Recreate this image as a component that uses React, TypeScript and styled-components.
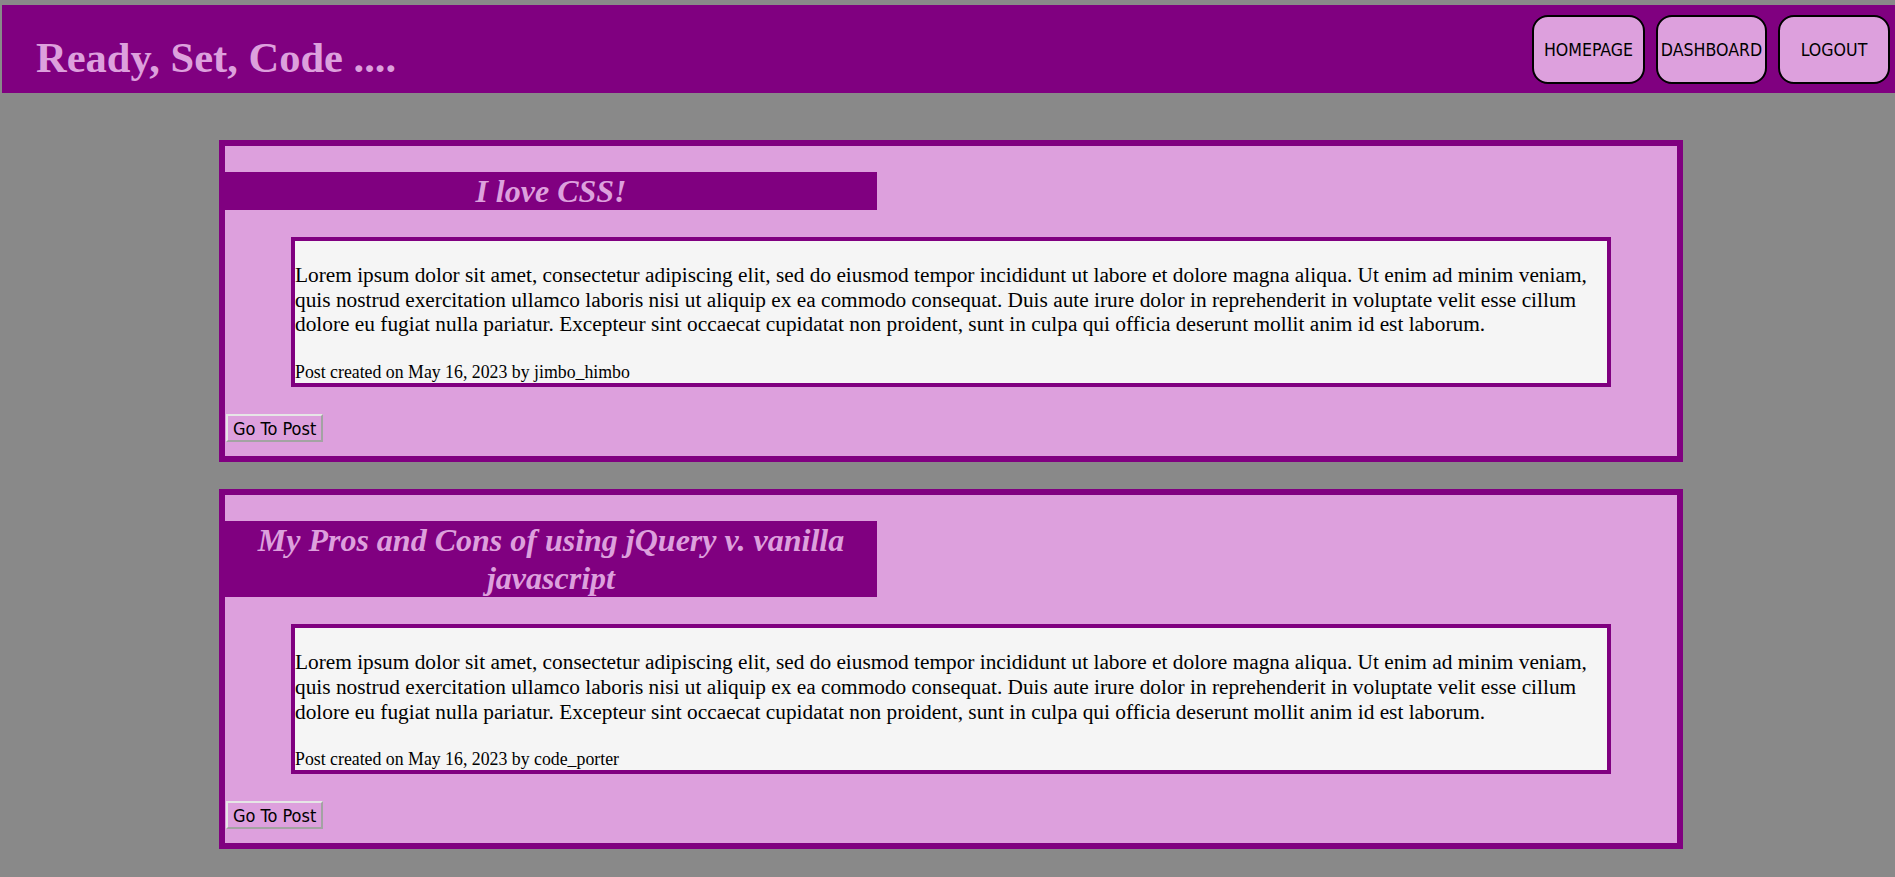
import styled, { createGlobalStyle } from 'styled-components';

const posts = [
  {
    id: 1,
    title: 'I love CSS!',
    date: 'May 16, 2023',
    author: 'jimbo_himbo',
  },
  {
    id: 2,
    title: 'My Pros and Cons of using jQuery v. vanilla javascript',
    date: 'May 16, 2023',
    author: 'code_porter',
  },
];

const lorem =
  'Lorem ipsum dolor sit amet, consectetur adipiscing elit, sed do eiusmod tempor incididunt ut labore et dolore magna aliqua. Ut enim ad minim veniam, quis nostrud exercitation ullamco laboris nisi ut aliquip ex ea commodo consequat. Duis aute irure dolor in reprehenderit in voluptate velit esse cillum dolore eu fugiat nulla pariatur. Excepteur sint occaecat cupidatat non proident, sunt in culpa qui officia deserunt mollit anim id est laborum.';

const navLinks = [
  { label: 'HOMEPAGE', width: 113 },
  { label: 'DASHBOARD', width: 111 },
  { label: 'LOGOUT', width: 112 },
];

export default function App() {
  return (
    <>
      <GlobalStyle />
      <Header>
        <Title>Ready, Set, Code ....</Title>
        <Nav>
          {navLinks.map((link) => (
            <NavButton key={link.label} $width={link.width}>
              {link.label}
            </NavButton>
          ))}
        </Nav>
      </Header>
      <Main>
        {posts.map((post) => (
          <Card key={post.id}>
            <PostTitle>{post.title}</PostTitle>
            <PostBody>
              <PostText>{lorem}</PostText>
              <PostMeta>
                Post created on {post.date} by {post.author}
              </PostMeta>
            </PostBody>
            <GoButton>Go To Post</GoButton>
          </Card>
        ))}
      </Main>
    </>
  );
}

const GlobalStyle = createGlobalStyle`
  html, body {
    margin: 0;
    background-color: #898989;
    font-family: "Liberation Serif", "Times New Roman", serif;
  }
`;

const Header = styled.header`
  display: flex;
  justify-content: space-between;
  align-items: flex-start;
  box-sizing: border-box;
  height: 88px;
  margin: 5px 0 0 2px;
  padding: 0 5px 0 34px;
  background-color: #800080;
`;

const Title = styled.h1`
  margin: 28px 0 0;
  font-size: 42.5px;
  font-weight: bold;
  color: #dda0dd;
  line-height: normal;
`;

const Nav = styled.nav`
  display: flex;
  gap: 11px;
  margin-top: 10px;
`;

const NavButton = styled.button<{ $width: number }>`
  box-sizing: border-box;
  width: ${(p) => p.$width}px;
  height: 69px;
  padding: 0;
  border: 2px solid #000;
  border-radius: 16px;
  background-color: #dda0dd;
  color: #000;
  font-family: "DejaVu Sans Condensed", "DejaVu Sans", sans-serif;
  font-stretch: condensed;
  font-size: 17.6px;
`;

const Main = styled.main`
  display: flex;
  flex-direction: column;
  gap: 27px;
  padding: 47px 212px 0 219px;
`;

const Card = styled.article`
  display: flex;
  flex-direction: column;
  align-items: flex-start;
  border: 6px solid #800080;
  background-color: #dda0dd;
  padding-bottom: 14px;
`;

const PostTitle = styled.h2`
  box-sizing: border-box;
  width: 44.9%;
  margin: 26px 0 27px;
  background-color: #800080;
  color: #dda0dd;
  font-size: 32px;
  font-style: italic;
  font-weight: bold;
  line-height: 38px;
  text-align: center;
`;

const PostBody = styled.div`
  align-self: stretch;
  margin: 0 66px;
  border: 4px solid #800080;
  background-color: #f5f5f5;
  color: #000;
`;

const PostText = styled.p`
  margin: 22px 0 0;
  font-size: 21.33px;
  line-height: 24.7px;
`;

const PostMeta = styled.p`
  margin: 25px 0 0;
  font-size: 17.8px;
  line-height: 21px;
`;

const GoButton = styled.button`
  box-sizing: border-box;
  height: 28px;
  margin: 27px 0 0 1px;
  padding: 0 5px;
  border: 2px solid;
  border-color: #e6e6e6 #a3a3a3 #a3a3a3 #e6e6e6;
  background-color: #dda0dd;
  color: #000;
  font-family: "DejaVu Sans Condensed", "DejaVu Sans", sans-serif;
  font-stretch: condensed;
  font-size: 18px;
`;
